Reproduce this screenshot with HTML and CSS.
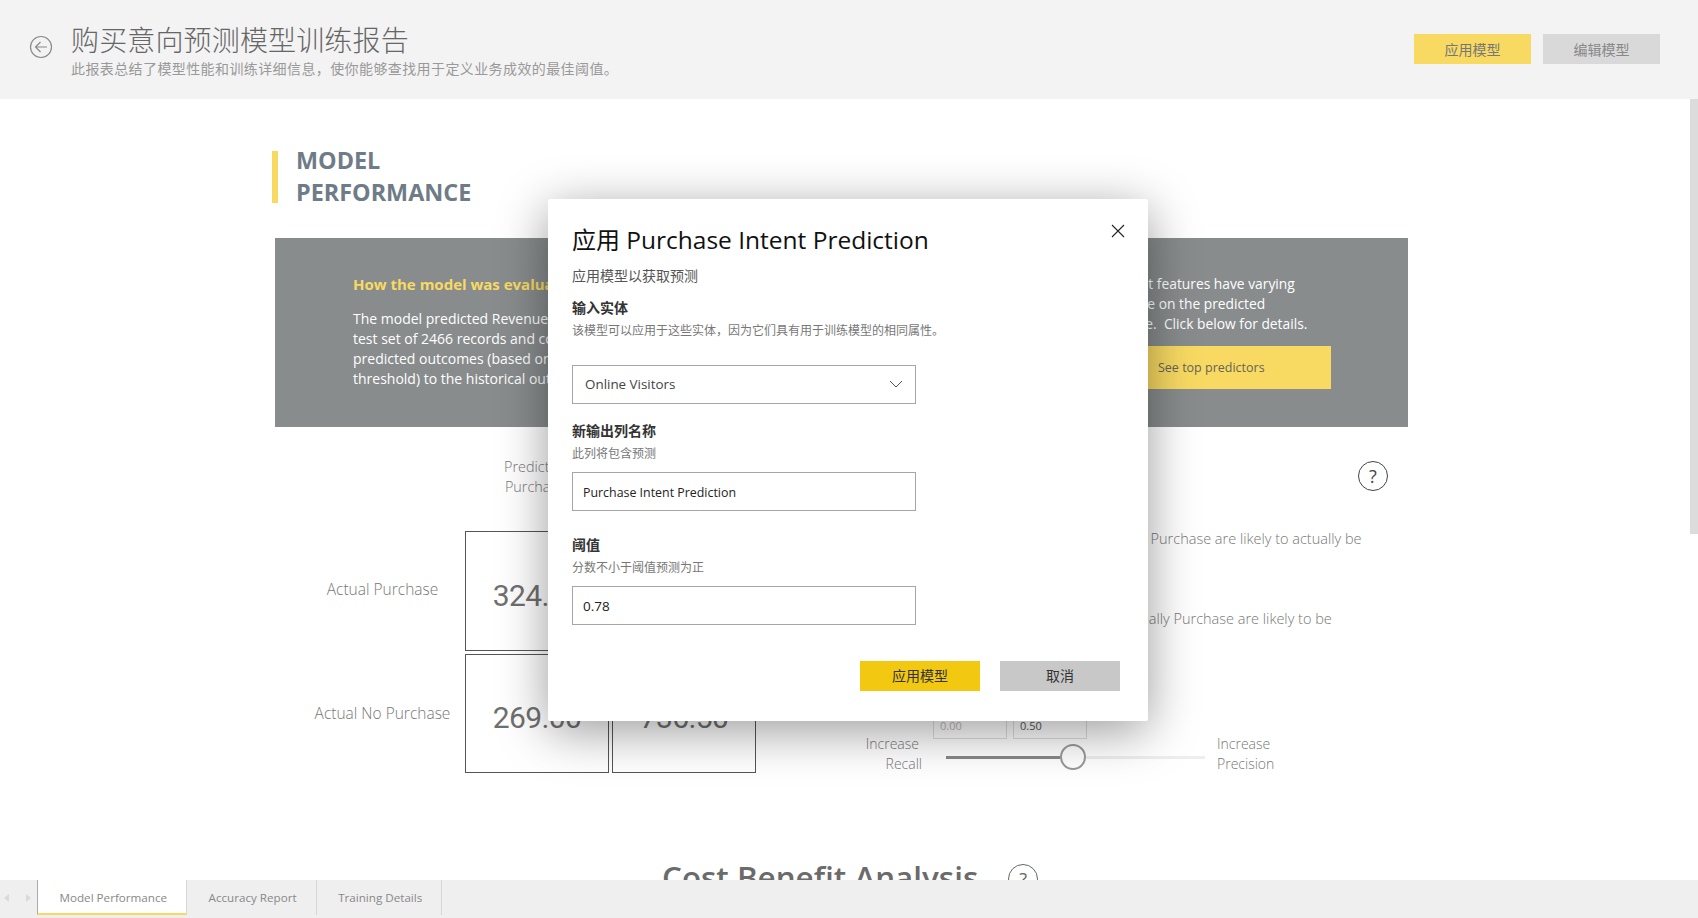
FILE: index.html
```html
<!DOCTYPE html>
<html lang="zh-CN">
<head>
    <meta charset="UTF-8">
    <meta name="viewport" content="width=device-width, initial-scale=1.0">
    <title>购买意向预测模型训练报告</title>
    <link rel="stylesheet" href="styles.css">
</head>
<body>
    <header class="top-bar">
        <svg class="back-icon" viewBox="0 0 24 24" width="24" height="24">
            <circle cx="12" cy="12" r="10.5"/>
            <path d="M18 12H6.5M11.5 7l-5 5 5 5"/>
        </svg>
        <div class="top-titles">
            <h1>购买意向预测模型训练报告</h1>
            <p>此报表总结了模型性能和训练详细信息，使你能够查找用于定义业务成效的最佳阈值。</p>
        </div>
        <div class="top-actions">
            <button class="btn-top btn-yellow">应用模型</button>
            <button class="btn-top btn-grey">编辑模型</button>
        </div>
    </header>

    <main class="report">
        <div class="scroll-thumb"></div>
        <div class="content">
            <h2 class="section-title">MODEL<br>PERFORMANCE</h2>

            <section class="panel">
                <div class="panel-left">
                    <h3>How the model was evaluated</h3>
                    <p>The model predicted Revenue on a<br>test set of 2466 records and compared<br>predicted outcomes (based on the<br>threshold) to the historical outcomes.</p>
                </div>
                <div class="panel-right">
                    <p>Different features have varying<br>influence on the predicted<br>outcome.&nbsp; Click below for details.</p>
                    <a class="predictors-btn">See top predictors</a>
                </div>
            </section>

            <section class="metrics">
                <div class="matrix">
                    <div></div>
                    <div class="col-head">Predicted<br>Purchase</div>
                    <div class="col-head">Predicted<br>No Purchase</div>
                    <div class="row-head">Actual Purchase</div>
                    <div class="cell">324.00</div>
                    <div class="cell">112.00</div>
                    <div class="row-head row-head-low">Actual No Purchase</div>
                    <div class="cell">269.00</div>
                    <div class="cell">736.50</div>
                </div>
                <div class="tuning">
                    <div class="help-row">
                        <span class="help-icon">?</span>
                    </div>
                    <p class="note note-one">Visitors predicted to Purchase are likely to actually be</p>
                    <p class="note note-two">All visitors who actually Purchase are likely to be</p>
                    <div class="range-boxes">
                        <span class="range-box range-min">0.00</span>
                        <span class="range-box">0.50</span>
                    </div>
                    <div class="slider-row">
                        <div class="slider-label slider-label-left"><span class="label-inset">Increase</span><br>Recall</div>
                        <div class="slider">
                            <div class="slider-fill"></div>
                            <div class="slider-thumb"></div>
                        </div>
                        <div class="slider-label">Increase<br>Precision</div>
                    </div>
                </div>
            </section>

            <section class="cost-head">
                <h2>Cost Benefit Analysis</h2>
                <span class="help-icon help-muted">?</span>
            </section>
        </div>
    </main>

    <footer class="tabs">
        <div class="tab-arrows">
            <span class="arrow arrow-left"></span>
            <span class="arrow arrow-right"></span>
        </div>
        <a class="tab tab-active">Model Performance</a>
        <a class="tab">Accuracy Report</a>
        <a class="tab">Training Details</a>
    </footer>

    <div class="modal">
        <svg class="modal-close" viewBox="0 0 14 14" width="14" height="14">
            <path d="M1 1l12 12M13 1L1 13"/>
        </svg>
        <h2 class="modal-title">应用 <span class="latin">Purchase Intent Prediction</span></h2>
        <p class="modal-sub">应用模型以获取预测</p>

        <div class="field-label field-first">输入实体</div>
        <div class="field-desc">该模型可以应用于这些实体，因为它们具有用于训练模型的相同属性。</div>
        <div class="field field-select">
            <span>Online Visitors</span>
            <svg viewBox="0 0 14 8" width="14" height="8"><path d="M1 1l6 6 6-6"/></svg>
        </div>

        <div class="field-label field-second">新输出列名称</div>
        <div class="field-desc">此列将包含预测</div>
        <div class="field field-tight">Purchase Intent Prediction</div>

        <div class="field-label field-third">阈值</div>
        <div class="field-desc">分数不小于阈值预测为正</div>
        <div class="field field-number">0.78</div>

        <div class="modal-actions">
            <button class="btn-modal btn-apply">应用模型</button>
            <button class="btn-modal btn-cancel">取消</button>
        </div>
    </div>
</body>
</html>
```

FILE: styles.css
```css
* {
    margin: 0;
    padding: 0;
    box-sizing: border-box;
}
body {
    font-family: "Open Sans", "Noto Sans CJK SC", sans-serif;
    height: 100vh;
    display: flex;
    flex-direction: column;
    overflow: hidden;
    background: white;
    color: #888;
}

/* top bar */
.top-bar {
    height: 99px;
    flex: none;
    background: #f3f3f3;
    display: flex;
    align-items: flex-start;
    padding: 0 38px 0 29px;
}
.back-icon {
    margin-top: 35px;
    fill: none;
    stroke: #8a8a8a;
    stroke-width: 1.2;
}
.top-titles {
    margin-left: 18px;
    padding-top: 22px;
    flex: 1;
}
.top-titles h1 {
    font-size: 28px;
    letter-spacing: 0.15px;
    font-weight: 300;
    line-height: 36px;
    color: #666;
}
.top-titles p {
    font-size: 14px;
    letter-spacing: 0.4px;
    line-height: 20px;
    color: #999;
    margin-top: 1px;
}
.top-actions {
    display: flex;
    gap: 12px;
    margin-top: 34px;
}
button {
    border: none;
    font-family: inherit;
    font-size: 14px;
}
.btn-top {
    width: 117px;
    height: 30px;
    color: #777;
}
.btn-yellow { background: #f8da62; }
.btn-grey { background: #d9d9d9; color: #888; }

/* report body */
.report {
    flex: 1;
    position: relative;
    overflow: hidden;
}
.scroll-thumb {
    position: absolute;
    top: 0;
    right: 0;
    width: 8px;
    height: 435px;
    background: #dcdcdc;
}
.content {
    width: 1136px;
    margin-left: 272px;
    padding-top: 52px;
}
.section-title {
    border-left: 6px solid #f8da62;
    padding-left: 18px;
    padding-bottom: 2px;
    font-size: 23.4px;
    font-weight: 700;
    line-height: 32px;
    height: 52px;
    color: #6f7c87;
    display: flex;
    flex-direction: column;
    justify-content: center;
}
.panel {
    margin: 35px 0 0 3px;
    height: 189px;
    background: #888c8d;
    display: flex;
    color: white;
}
.panel-left {
    width: 821px;
    padding: 36px 0 0 78px;
}
.panel-left h3 {
    font-size: 15px;
    font-weight: 700;
    line-height: 20px;
    color: #f8da62;
}
.panel-left p {
    margin-top: 15px;
    font-size: 14px;
    line-height: 20px;
}
.panel-right {
    padding-top: 36px;
}
.panel-right p {
    font-size: 13.8px;
    line-height: 20px;
}
.predictors-btn {
    display: block;
    width: 232px;
    height: 43px;
    margin: 12px 0 0 3px;
    padding-left: 59px;
    background: #f8da62;
    color: #66645c;
    font-size: 12.5px;
    line-height: 44px;
}

/* matrix and sliders */
.metrics {
    display: flex;
    margin-top: 30px;
}
.matrix {
    margin-left: 28px;
    display: grid;
    grid-template-columns: 162px 144px 144px;
    grid-template-rows: 71px 120px 119px;
    column-gap: 3px;
    row-gap: 3px;
}
.col-head {
    padding-right: 4px;
    text-align: center;
    font-size: 14.4px;
    font-weight: 300;
    line-height: 20px;
    color: #777;
}
.row-head {
    padding-left: 3px;
    margin-top: -4px;
    text-align: center;
    font-size: 15.5px;
    font-weight: 300;
    color: #777;
    align-self: center;
}
.row-head-low {
    margin-top: -2px;
}
.cell {
    border: 1px solid #555;
    display: flex;
    align-items: center;
    justify-content: center;
    font-family: Roboto, sans-serif;
    font-size: 30px;
    letter-spacing: -0.6px;
    color: #707070;
    padding-top: 8px;
}
.tuning {
    margin-left: 115px;
    width: 524px;
}
.help-row {
    display: flex;
    justify-content: flex-end;
    padding: 4px 7px 0 0;
}
.help-icon {
    width: 30px;
    height: 30px;
    border: 1.7px solid #444;
    border-radius: 50%;
    display: flex;
    align-items: center;
    justify-content: center;
    font-size: 18px;
    color: #444;
}
.note {
    font-size: 14.5px;
    font-weight: 300;
    line-height: 20px;
    color: #777;
    white-space: nowrap;
}
.note-one {
    margin: 38px 0 0 145px;
}
.note-two {
    margin: 60px 0 0 150px;
}
.range-boxes {
    display: flex;
    gap: 6px;
    margin: 84px 0 0 62px;
}
.range-box {
    width: 74px;
    height: 26px;
    border: 1px solid #ddd;
    font-size: 11px;
    line-height: 24px;
    padding-left: 6px;
    color: #555;
}
.range-min { color: #bbb; }
.slider-row {
    display: grid;
    grid-template-columns: 56px 259px auto;
    column-gap: 24px;
    margin: -5px 0 0 -5px;
    align-items: center;
}
.slider-label {
    font-size: 14px;
    font-weight: 300;
    line-height: 20px;
    color: #777;
    margin-left: -12px;
}
.slider-label-left {
    text-align: right;
    margin-left: -10px;
}
.label-inset {
    margin-right: 3px;
}
.slider {
    height: 3px;
    margin-top: 6px;
    background: #eee;
    display: flex;
    align-items: center;
}
.slider-fill {
    width: 114px;
    height: 3px;
    background: #888;
}
.slider-thumb {
    width: 26px;
    height: 26px;
    border: 2px solid #999;
    border-radius: 50%;
    background: white;
    flex: none;
}
.cost-head {
    display: flex;
    align-items: flex-start;
    margin: 81px 0 0 390px;
    gap: 30px;
}
.cost-head h2 {
    font-size: 31.4px;
    font-weight: 600;
    line-height: 44px;
    color: #6b6b6b;
    white-space: nowrap;
}
.help-muted {
    margin-top: 9px;
    border-color: #666;
    color: #666;
}

/* bottom tabs */
.tabs {
    height: 38px;
    flex: none;
    background: #efefef;
    display: flex;
    align-items: flex-start;
    font-size: 11.65px;
}
.tab-arrows {
    width: 37px;
    height: 35px;
    display: flex;
    align-items: center;
    gap: 17px;
    padding-left: 4px;
}
.arrow {
    border-top: 4px solid transparent;
    border-bottom: 4px solid transparent;
}
.arrow-left { border-right: 5px solid #dadada; }
.arrow-right { border-left: 5px solid #dadada; }
.tab {
    height: 35px;
    line-height: 36px;
    padding: 0 19px 0 21.5px;
    border-right: 1px solid #d6d6d6;
    color: #888;
}
.tab-active {
    background: white;
    border-left: 1px solid #aaa;
    border-bottom: 2px solid #f8da62;
    height: 35px;
}

/* apply dialog */
.modal {
    position: absolute;
    left: 548px;
    top: 199px;
    width: 600px;
    height: 522px;
    padding: 24px 28px 30px 24px;
    background: white;
    border-radius: 2px;
    box-shadow: 0 10px 50px rgba(0, 0, 0, 0.4);
    color: #333;
}
.modal-close {
    position: absolute;
    top: 25px;
    right: 23px;
    fill: none;
    stroke: #222;
    stroke-width: 1.1;
}
.modal-title {
    font-size: 24px;
    font-weight: 400;
    line-height: 34px;
    color: #111;
}
.modal-title .latin {
    font-size: 24.5px;
}
.modal-sub {
    margin-top: 9px;
    font-size: 14px;
    line-height: 20px;
    color: #555;
}
.field-label {
    font-size: 14px;
    font-weight: 700;
    line-height: 20px;
    color: #333;
}
.field-first { margin-top: 12px; }
.field-second { margin-top: 17px; }
.field-third { margin-top: 24px; }
.field-desc {
    margin-top: 5px;
    font-size: 12px;
    line-height: 16px;
    color: #777;
}
.field {
    width: 344px;
    height: 39px;
    margin-top: 10px;
    padding: 0 10px;
    border: 1px solid #a6a6a6;
    display: flex;
    align-items: center;
    font-size: 12.4px;
    color: #222;
}
.field-select {
    margin-top: 26px;
    padding: 0 12px 2px;
    justify-content: space-between;
    font-size: 13.4px;
    color: #444;
}
.field-select svg {
    fill: none;
    stroke: #555;
    stroke-width: 1;
}
.field-tight {
    padding-top: 1px;
}
.field-number {
    font-size: 13.5px;
}
.modal-actions {
    display: flex;
    justify-content: flex-end;
    gap: 20px;
    margin-top: 36px;
}
.btn-modal {
    width: 120px;
    height: 30px;
    padding-bottom: 2px;
    color: #333;
}
.btn-apply { background: #f2c811; }
.btn-cancel { background: #c8c8c8; }
```
